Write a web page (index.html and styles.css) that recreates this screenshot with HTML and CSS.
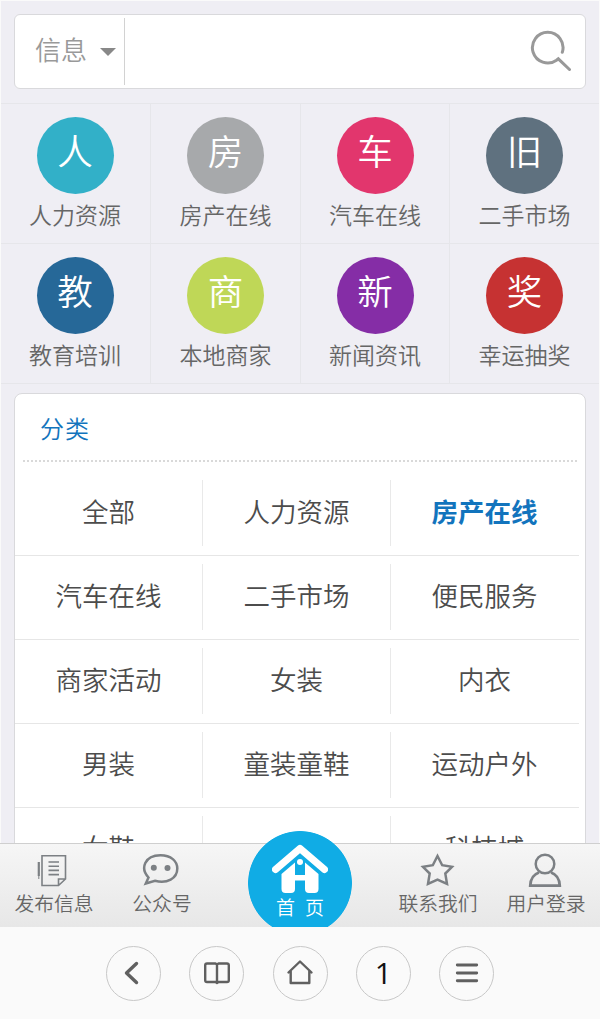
FILE: index.html
```html
<!DOCTYPE html>
<html lang="zh-CN">
<head>
    <meta charset="UTF-8">
    <meta name="viewport" content="width=device-width, initial-scale=1.0">
    <title>分类信息</title>
    <link rel="stylesheet" href="styles.css">
</head>
<body>

    <div class="page">
        <form class="search">
            <div class="search-type">信息<span class="arrow"></span></div>
            <div class="search-input"></div>
            <svg class="search-icon" width="42" height="42" viewBox="0 0 42 42">
                <path d="M32.3 22.3A15.3 15.3 0 1 0 26.5 30.2L28.3 28.8L39.5 39.5" />
            </svg>
        </form>

        <div class="nav">
            <a class="nav-item"><span class="circle cyan">人</span>人力资源</a>
            <a class="nav-item"><span class="circle gray">房</span>房产在线</a>
            <a class="nav-item"><span class="circle pink">车</span>汽车在线</a>
            <a class="nav-item"><span class="circle slate">旧</span>二手市场</a>
            <a class="nav-item"><span class="circle blue">教</span>教育培训</a>
            <a class="nav-item"><span class="circle green">商</span>本地商家</a>
            <a class="nav-item"><span class="circle purple">新</span>新闻资讯</a>
            <a class="nav-item"><span class="circle red">奖</span>幸运抽奖</a>
        </div>

        <div class="panel">
            <h2>分类</h2>
            <div class="category">
                <a>全部</a>
                <a>人力资源</a>
                <a class="active">房产在线</a>
                <a>汽车在线</a>
                <a>二手市场</a>
                <a>便民服务</a>
                <a>商家活动</a>
                <a>女装</a>
                <a>内衣</a>
                <a>男装</a>
                <a>童装童鞋</a>
                <a>运动户外</a>
                <a>女鞋</a>
                <a></a>
                <a>科技城</a>
            </div>
        </div>
    </div>

    <div class="tabbar">
        <a class="tab">
            <svg width="36" height="36" viewBox="0 0 36 36">
                <path d="M6 2.700H29.500V26L22.500 32.500H6ZM22.500 32.500V26H29.500M12.500 9H23M12.500 13.200H23M12.500 17.400H23M12.500 21.600H23" stroke-width="1.600" />
                <path d="M2.800 9V23" stroke-width="2.200" />
                <path d="M2.800 23V26" stroke-width="1" />
            </svg>
            发布信息
        </a>
        <a class="tab">
            <svg width="42" height="36" viewBox="0 0 42 36">
                <path d="M7.500 24.500C-1 15.500 3.500 2.200 19.500 2.200C30 2.200 36.300 8.200 36.300 15.500C36.300 25.500 26 31 14 27.800L4.800 30.500Z" stroke-width="2.500" />
                <circle cx="12.800" cy="14.700" r="3" class="dot" />
                <circle cx="26.500" cy="14.900" r="3" class="dot" />
            </svg>
            公众号
        </a>
        <a class="home">
            <svg width="56" height="50" viewBox="0 0 56 50">
                <path d="M3.500 26.500L28 5.500L52.500 26.500" class="roof" />
                <path d="M9.500 31L23 19.500V32H33V19.500L46.500 31V46Q46.500 50 42.500 50H37Q33 50 33 46V37.500H23V46Q23 50 19 50H13.500Q9.500 50 9.500 46Z" class="wall" />
                <circle cx="28" cy="19" r="3" class="wall" />
            </svg>
            <span>首 页</span>
        </a>
        <a class="tab">
            <svg width="36" height="36" viewBox="0 0 36 36">
                <path d="M17.500 3L22.200 12.200L32 13.800L25.300 20.500L27 30.800L17.500 26.500L8 30.800L9.700 20.500L3 13.800L12.800 12.200Z" stroke-width="2.500" />
            </svg>
            联系我们
        </a>
        <a class="tab">
            <svg width="36" height="36" viewBox="0 0 36 36">
                <circle cx="17" cy="11" r="9.300" stroke-width="2.500" />
                <path d="M11 19.500C5 21.500 2.500 26.500 2.200 32.700H31.800C31.500 26.500 29 21.500 23 19.500" stroke-width="2.700" />
            </svg>
            用户登录
        </a>
    </div>

    <div class="toolbar">
        <a><svg width="28" height="28" viewBox="0 0 28 28"><path d="M17.500 4.500L7.500 14L17.500 23.500" stroke-width="3.400" /></svg></a>
        <a><svg width="28" height="28" viewBox="0 0 28 28"><path d="M14 24V5.500M14 5.500L12.500 4.500H4Q2.200 4.500 2.200 6.300V21.200Q2.200 23 4 23H12.500L14 24L15.500 23H24Q25.800 23 25.800 21.200V6.300Q25.800 4.500 24 4.500H15.500Z" stroke-width="2.400" /></svg></a>
        <a><svg width="28" height="28" viewBox="0 0 28 28"><path d="M2.500 13.500L14 2.500L25.500 13.500M4.700 12V24H23.300V12" stroke-width="2.400" /></svg></a>
        <a class="count">1</a>
        <a><svg width="28" height="28" viewBox="0 0 28 28"><path d="M4.300 6H23.700M4.300 14H23.700M4.300 21.700H23.700" stroke-width="2.900" /></svg></a>
    </div>

</body>
</html>
```
FILE: styles.css
```css
* {
    margin: 0;
    padding: 0;
    box-sizing: border-box;
}

body {
    font-family: "Noto Sans CJK SC", sans-serif;
    font-weight: 350;
    background: #fafafa;
    color: #666;
    height: 1019px;
    display: flex;
    flex-direction: column;
    overflow: hidden;
}

.page {
    flex: 1;
    min-height: 0;
    overflow: hidden;
    background: #efeef4;
    border: 1px solid #fafafa;
    border-bottom: none;
    padding-top: 13px;
}

.search {
    display: flex;
    align-items: center;
    height: 75px;
    margin: 0 13px;
    background: #fff;
    border: 1px solid #d9d9dc;
    border-radius: 6px;
}

.search-type {
    display: flex;
    align-items: center;
    width: 110px;
    height: 67px;
    padding: 0 0 6px 20px;
    border-right: 1px solid #d2d2d2;
    font-size: 26px;
    color: #999;
}

.arrow {
    margin: 6px 0 0 13px;
    border: 8px solid transparent;
    border-top-color: #888;
    border-bottom: none;
}

.search-input {
    flex: 1;
}

.search-icon {
    margin: 0 13px 2px 0;
    fill: none;
    stroke: #999;
    stroke-width: 3;
    stroke-linecap: round;
}

.nav {
    display: grid;
    grid-template-columns: 151px 150px 149px 150px;
    margin: 14px -1px 0;
    border-top: 1px solid #e6e6ea;
}

.nav-item {
    display: flex;
    flex-direction: column;
    align-items: center;
    height: 140px;
    padding: 13px 0 0;
    border-right: 1px solid #e6e6ea;
    border-bottom: 1px solid #e6e6ea;
    font-size: 23px;
    line-height: 41px;
}

.circle {
    width: 77px;
    height: 77px;
    border-radius: 50%;
    color: #fff;
    font-size: 35.500px;
    line-height: 66px;
    text-align: center;
}

.cyan { background: #32b0c8; }
.gray { background: #a7a9ab; }
.pink { background: #e2366d; }
.slate { background: #5f717f; }
.blue { background: #266898; }
.green { background: #bfd757; }
.purple { background: #852da6; }
.red { background: #c63232; }

.panel {
    margin: 9px 13px 0;
    background: #fff;
    border: 1px solid #d9d9dc;
    border-radius: 8px;
}

.panel h2 {
    height: 68px;
    margin: 0 8px;
    padding-left: 17px;
    border-bottom: 2px dotted #d9d9d9;
    font-size: 24px;
    font-weight: inherit;
    line-height: 67px;
    letter-spacing: 1px;
    color: #1274bd;
}

.category {
    display: grid;
    grid-template-columns: repeat(3, 188px);
    padding-top: 10px;
}

.category a {
    height: 84px;
    border-bottom: 1px solid #e6e6e6;
    padding: 8px 1px 8px 0;
    color: #4c4c4c;
    font-size: 26.500px;
    line-height: 62px;
    text-align: center;
    background: linear-gradient(#e9e9e9, #e9e9e9) right 8px / 1px 66px no-repeat;
}

.category a:nth-child(3n) {
    background: none;
}

.category .active {
    color: #1274bd;
    font-weight: bold;
}

.tabbar {
    position: relative;
    display: flex;
    justify-content: space-between;
    height: 84px;
    border-top: 1px solid #cfcfcf;
    background: linear-gradient(#f6f6f6, #e7e7e7);
}

.tab {
    display: flex;
    flex-direction: column;
    align-items: center;
    width: 108px;
    padding-top: 9px;
    font-size: 19.800px;
    line-height: 27px;
}

.tab:nth-child(2) {
    margin-right: 168px;
}

.tab svg {
    fill: none;
    stroke: #7c8084;
}

.tab .dot {
    fill: #7c8084;
    stroke: none;
}

/* blue button rises over the content above the bar */
.home {
    position: absolute;
    left: 248px;
    top: -13px;
    width: 104px;
    height: 96px;
    display: flex;
    flex-direction: column;
    align-items: center;
    padding-top: 12px;
    background: radial-gradient(circle at 52px 52px, #10ace5 51.500px, transparent 52.300px);
    color: #fff;
    font-size: 19px;
    line-height: 28px;
    word-spacing: 6px;
}

.roof {
    fill: none;
    stroke: #fff;
    stroke-width: 7;
    stroke-linecap: round;
    stroke-linejoin: round;
}

.wall {
    fill: #fff;
}

.toolbar {
    display: flex;
    justify-content: center;
    align-items: center;
    gap: 28.300px;
    height: 92px;
}

.toolbar a {
    display: flex;
    justify-content: center;
    align-items: center;
    width: 55px;
    height: 55px;
    border: 1px solid #c8c8c8;
    border-radius: 50%;
}

.toolbar svg {
    fill: none;
    stroke: #606060;
    stroke-linecap: round;
    stroke-linejoin: round;
}

.toolbar .count {
    color: #111;
    font-family: "Open Sans", sans-serif;
    font-size: 30px;
    font-weight: normal;
    line-height: 50px;
}
```
